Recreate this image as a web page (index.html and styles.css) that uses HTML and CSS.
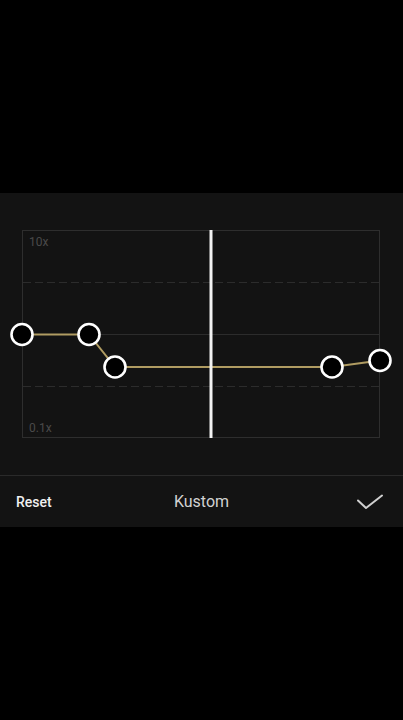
FILE: index.html
```html
<!DOCTYPE html>
<html lang="id">
<head>
    <meta charset="UTF-8">
    <meta name="viewport" content="width=device-width, initial-scale=1.0">
    <title>Kecepatan Kustom</title>
    <link rel="stylesheet" href="styles.css">
</head>
<body>
    <div class="preview"></div>

    <div class="panel">
        <div class="graph-wrap">
            <svg class="graph" width="358" height="208" viewBox="0 0 358 208">
                <rect class="frame" x="0.5" y="0.5" width="357" height="207"></rect>
                <line class="grid dashed" x1="1" y1="52.5" x2="357" y2="52.5"></line>
                <line class="grid" x1="1" y1="104.5" x2="357" y2="104.5"></line>
                <line class="grid dashed" x1="1" y1="156.5" x2="357" y2="156.5"></line>
                <text class="axis" x="7" y="16">10x</text>
                <text class="axis" x="7" y="202">0.1x</text>

                <polyline class="curve" points="0,104.5 67,104.5 93,137 310,137 358,130.5"></polyline>

                <rect class="playhead" x="187.5" y="0" width="3" height="208"></rect>

                <circle class="node" cx="0" cy="104.5" r="10.5"></circle>
                <circle class="node" cx="67" cy="104.5" r="10.5"></circle>
                <circle class="node" cx="93" cy="137" r="10.5"></circle>
                <circle class="node" cx="310" cy="137" r="10.5"></circle>
                <circle class="node" cx="358" cy="130.5" r="10.5"></circle>
            </svg>
        </div>

        <div class="toolbar">
            <button class="reset">Reset</button>
            <span class="title">Kustom</span>
            <button class="done" aria-label="Selesai">
                <svg width="26" height="16" viewBox="0 0 26 16">
                    <polyline points="1,6.5 9,14 25,1.5"></polyline>
                </svg>
            </button>
        </div>
    </div>
</body>
</html>
```

FILE: styles.css
```css
body {
    margin: 0;
    background-color: #000;
    font-family: Roboto, "Noto Sans", sans-serif;
    height: 720px;
    overflow: hidden;
}
.preview {
    height: 193px;
}
.panel {
    background-color: #131313;
    height: 334px;
    display: flex;
    flex-direction: column;
}
.graph-wrap {
    padding: 37px 23px 0 22px;
}
.graph {
    display: block;
    overflow: visible;
}
.frame {
    fill: none;
    stroke: #2e2e2e;
    stroke-width: 1;
}
.grid {
    stroke: #2c2c2c;
    stroke-width: 1;
}
.dashed {
    stroke-dasharray: 8 4;
}
.axis {
    fill: #4a4a4a;
    font-family: Roboto, "Noto Sans", sans-serif;
    font-size: 12px;
}
.curve {
    fill: none;
    stroke: #b09c62;
    stroke-width: 2;
}
.playhead {
    fill: #f2f2f2;
}
.node {
    fill: #000;
    stroke: #fff;
    stroke-width: 2.6;
}
.toolbar {
    margin-top: 37px;
    border-top: 1px solid #2a2a2a;
    height: 51px;
    display: flex;
    align-items: center;
    justify-content: space-between;
    padding: 0 20px 0 16px;
    position: relative;
}
button {
    font-family: inherit;
    background: none;
    border: none;
    padding: 0;
    cursor: pointer;
}
.reset {
    color: #f0f0f0;
    font-size: 14px;
    font-weight: 500;
}
.title {
    position: absolute;
    left: 0;
    right: 0;
    text-align: center;
    color: #d2d2d2;
    font-size: 16px;
    pointer-events: none;
}
.done {
    display: flex;
}
.done polyline {
    fill: none;
    stroke: #d0d0d0;
    stroke-width: 2;
    stroke-linecap: round;
    stroke-linejoin: round;
}
```
